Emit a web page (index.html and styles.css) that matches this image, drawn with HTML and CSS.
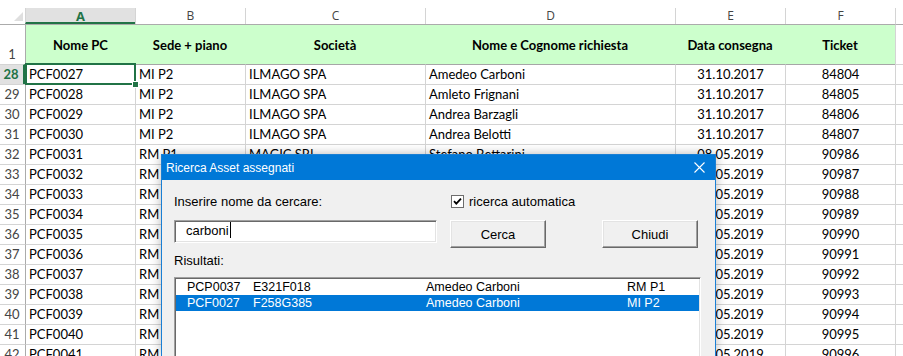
FILE: index.html
```html
<!DOCTYPE html>
<html lang="it">
<head>
    <meta charset="UTF-8">
    <title>Ricerca Asset assegnati</title>
    <link rel="stylesheet" href="styles.css">
</head>
<body>

    <div class="sheet">
        <div class="topbar"></div>

        <div class="row colhead">
            <div class="corner"><span class="tri"></span></div>
            <div class="ch active">A</div>
            <div class="ch">B</div>
            <div class="ch">C</div>
            <div class="ch">D</div>
            <div class="ch">E</div>
            <div class="ch">F</div>
            <div class="ch"></div>
        </div>

        <div class="row head">
            <div class="rh">1</div>
            <div class="c">Nome PC</div>
            <div class="c">Sede + piano</div>
            <div class="c">Società</div>
            <div class="c">Nome e Cognome richiesta</div>
            <div class="c">Data consegna</div>
            <div class="c">Ticket</div>
            <div class="c blank"></div>
        </div>

        <div class="row first">
            <div class="rh sel">28</div>
            <div class="c cur">PCF0027</div>
            <div class="c">MI P2</div>
            <div class="c">ILMAGO SPA</div>
            <div class="c">Amedeo Carboni</div>
            <div class="c mid">31.10.2017</div>
            <div class="c mid">84804</div>
            <div class="c"></div>
        </div>
        <div class="row">
            <div class="rh">29</div>
            <div class="c">PCF0028</div>
            <div class="c">MI P2</div>
            <div class="c">ILMAGO SPA</div>
            <div class="c">Amleto Frignani</div>
            <div class="c mid">31.10.2017</div>
            <div class="c mid">84805</div>
            <div class="c"></div>
        </div>
        <div class="row">
            <div class="rh">30</div>
            <div class="c">PCF0029</div>
            <div class="c">MI P2</div>
            <div class="c">ILMAGO SPA</div>
            <div class="c">Andrea Barzagli</div>
            <div class="c mid">31.10.2017</div>
            <div class="c mid">84806</div>
            <div class="c"></div>
        </div>
        <div class="row">
            <div class="rh">31</div>
            <div class="c">PCF0030</div>
            <div class="c">MI P2</div>
            <div class="c">ILMAGO SPA</div>
            <div class="c">Andrea Belotti</div>
            <div class="c mid">31.10.2017</div>
            <div class="c mid">84807</div>
            <div class="c"></div>
        </div>
        <div class="row">
            <div class="rh">32</div>
            <div class="c">PCF0031</div>
            <div class="c">RM P1</div>
            <div class="c">MAGIC SRL</div>
            <div class="c">Stefano Bettarini</div>
            <div class="c mid">08.05.2019</div>
            <div class="c mid">90986</div>
            <div class="c"></div>
        </div>
        <div class="row">
            <div class="rh">33</div>
            <div class="c">PCF0032</div>
            <div class="c">RM P1</div>
            <div class="c"></div>
            <div class="c"></div>
            <div class="c mid">08.05.2019</div>
            <div class="c mid">90987</div>
            <div class="c"></div>
        </div>
        <div class="row">
            <div class="rh">34</div>
            <div class="c">PCF0033</div>
            <div class="c">RM P1</div>
            <div class="c"></div>
            <div class="c"></div>
            <div class="c mid">08.05.2019</div>
            <div class="c mid">90988</div>
            <div class="c"></div>
        </div>
        <div class="row">
            <div class="rh">35</div>
            <div class="c">PCF0034</div>
            <div class="c">RM P1</div>
            <div class="c"></div>
            <div class="c"></div>
            <div class="c mid">08.05.2019</div>
            <div class="c mid">90989</div>
            <div class="c"></div>
        </div>
        <div class="row">
            <div class="rh">36</div>
            <div class="c">PCF0035</div>
            <div class="c">RM P1</div>
            <div class="c"></div>
            <div class="c"></div>
            <div class="c mid">08.05.2019</div>
            <div class="c mid">90990</div>
            <div class="c"></div>
        </div>
        <div class="row">
            <div class="rh">37</div>
            <div class="c">PCF0036</div>
            <div class="c">RM P1</div>
            <div class="c"></div>
            <div class="c"></div>
            <div class="c mid">08.05.2019</div>
            <div class="c mid">90991</div>
            <div class="c"></div>
        </div>
        <div class="row">
            <div class="rh">38</div>
            <div class="c">PCF0037</div>
            <div class="c">RM P1</div>
            <div class="c"></div>
            <div class="c"></div>
            <div class="c mid">08.05.2019</div>
            <div class="c mid">90992</div>
            <div class="c"></div>
        </div>
        <div class="row">
            <div class="rh">39</div>
            <div class="c">PCF0038</div>
            <div class="c">RM P1</div>
            <div class="c"></div>
            <div class="c"></div>
            <div class="c mid">08.05.2019</div>
            <div class="c mid">90993</div>
            <div class="c"></div>
        </div>
        <div class="row">
            <div class="rh">40</div>
            <div class="c">PCF0039</div>
            <div class="c">RM P1</div>
            <div class="c"></div>
            <div class="c"></div>
            <div class="c mid">08.05.2019</div>
            <div class="c mid">90994</div>
            <div class="c"></div>
        </div>
        <div class="row">
            <div class="rh">41</div>
            <div class="c">PCF0040</div>
            <div class="c">RM P1</div>
            <div class="c"></div>
            <div class="c"></div>
            <div class="c mid">08.05.2019</div>
            <div class="c mid">90995</div>
            <div class="c"></div>
        </div>
        <div class="row">
            <div class="rh">42</div>
            <div class="c">PCF0041</div>
            <div class="c">RM P1</div>
            <div class="c"></div>
            <div class="c"></div>
            <div class="c mid">08.05.2019</div>
            <div class="c mid">90996</div>
            <div class="c"></div>
        </div>
    </div>

    <div class="dialog">
        <div class="titlebar">
            <span>Ricerca Asset assegnati</span>
            <svg class="close" width="11" height="11" viewBox="0 0 11 11">
                <path d="M0.5 0.5 L10.5 10.5 M10.5 0.5 L0.5 10.5" stroke="#fff" stroke-width="1.1" fill="none"/>
            </svg>
        </div>
        <div class="dlg-body">
            <div class="line1">
                <span class="lbl">Inserire nome da cercare:</span>
                <label class="chk">
                    <svg width="13" height="13" viewBox="0 0 13 13">
                        <rect x="0.5" y="0.5" width="12" height="12" fill="#fff" stroke="#6d6d6d"/>
                        <path d="M3 6.2 L5.3 8.6 L10 3.6" stroke="#000" stroke-width="1.8" fill="none"/>
                    </svg>
                    <span>ricerca automatica</span>
                </label>
            </div>
            <div class="line2">
                <div class="textbox">carboni<span class="caret"></span></div>
                <button class="btn cerca">Cerca</button>
                <button class="btn chiudi">Chiudi</button>
            </div>
            <div class="lbl risultati">Risultati:</div>
            <div class="listbox">
                <div class="item">
                    <span>PCP0037</span><span>E321F018</span><span>Amedeo Carboni</span><span>RM P1</span>
                </div>
                <div class="item sel">
                    <span>PCF0027</span><span>F258G385</span><span>Amedeo Carboni</span><span>MI P2</span>
                </div>
            </div>
        </div>
    </div>

</body>
</html>
```

FILE: styles.css
```css
body {
    margin: 0;
    width: 903px;
    height: 356px;
    overflow: hidden;
    position: relative;
    background: #fff;
    font-family: Lato, "Liberation Sans", sans-serif;
    font-size: 13px;
    color: #000;
}
.sheet {
    height: 356px;
    overflow: hidden;
}
.topbar {
    height: 8px;
}
.row {
    display: grid;
    grid-template-columns: 25px 110px 110px 180px 250px 110px 110px 8px;
    height: 20px;
}
.row > div {
    box-sizing: border-box;
    border-left: 1px solid #d4d4d4;
    border-top: 1px solid #d4d4d4;
    white-space: nowrap;
    overflow: hidden;
    line-height: 19px;
}
.c {
    padding-left: 3px;
}
.mid {
    text-align: center;
    padding-left: 0;
}

/* column letters */
.colhead {
    height: 16px;
}
.colhead > div {
    border-top: none;
    line-height: 16px;
}
.corner {
    position: relative;
    border-left: none !important;
}
.tri {
    position: absolute;
    right: 2px;
    bottom: 3px;
    width: 0;
    height: 0;
    border-left: 9px solid transparent;
    border-bottom: 9px solid #dfdfdf;
}
.ch {
    text-align: center;
    font-family: "Open Sans", sans-serif;
    font-size: 12px;
    color: #444;
}
.ch.active {
    background: #e1e1e1;
    color: #217346;
    font-weight: bold;
    font-size: 13px;
    border-bottom: 2px solid #217346;
}

/* row numbers */
.rh {
    border-left: none !important;
    text-align: center;
    color: #444;
    padding-right: 1px;
}
.row > .c:nth-child(2) {
    border-left-color: #ababab;
}
.rh.sel {
    background: #e1e1e1;
    color: #217346;
    font-weight: bold;
    border-right: 2px solid #217346;
}

/* table heading row */
.head {
    height: 40px;
}
.head > div {
    border-top-color: #ababab;
    line-height: 40px;
}
.head .rh {
    line-height: 14px;
    padding-top: 22px;
}
.head .c {
    background: #ccffcc;
    font-weight: bold;
    text-align: center;
    padding-left: 0;
}
.head .c + .c {
    border-left: none;
}
.head .c.blank {
    background: #fff;
    border-left: 1px solid #d4d4d4;
}
.first > .c {
    border-top-color: #a6a6a6;
}
.first > .c:last-child {
    border-top-color: #d4d4d4;
}
.cur {
    position: relative;
    overflow: visible !important;
}
.cur::after {
    content: "";
    position: absolute;
    left: -1px;
    top: -2px;
    right: -1px;
    bottom: -1px;
    border: 2px solid #217346;
}
.cur::before {
    content: "";
    position: absolute;
    right: -4px;
    bottom: -4px;
    width: 5px;
    height: 5px;
    background: #217346;
    border: 1px solid #fff;
    z-index: 2;
}

/* dialog */
.dialog {
    position: absolute;
    left: 161px;
    top: 154px;
    width: 553px;
    height: 201px;
    overflow: hidden;
    background: #f0f0f0;
    border: 1px solid #1a7fd4;
    border-bottom: none;
    box-shadow: 0 0 10px rgba(0, 0, 0, 0.28);
    font-family: "Liberation Sans", Arial, sans-serif;
    font-size: 13px;
}
.titlebar {
    height: 25px;
    background: #0078d7;
    color: #fff;
    font-size: 12px;
    display: flex;
    align-items: center;
    padding-left: 4px;
}
.close {
    margin-left: auto;
    margin-right: 10px;
}
.dlg-body {
    padding-left: 12px;
}
.line1 {
    display: flex;
    align-items: center;
    height: 16px;
    margin-top: 13px;
}
.line1 .lbl {
    width: 277px;
}
.chk {
    display: flex;
    align-items: center;
    gap: 5px;
}
.chk svg {
    display: block;
}
.line2 {
    display: flex;
    align-items: flex-start;
    margin-top: 11px;
    height: 28px;
}
.textbox {
    box-sizing: border-box;
    width: 263px;
    height: 23px;
    background: #fff;
    border-top: 1px solid #a0a0a0;
    border-left: 1px solid #a0a0a0;
    border-right: 1px solid #fff;
    border-bottom: 1px solid #fff;
    box-shadow: inset 1px 1px 0 #696969, inset -1px -1px 0 #e3e3e3;
    padding-left: 11px;
    line-height: 20px;
}
.caret {
    display: inline-block;
    width: 1px;
    height: 16px;
    background: #000;
    vertical-align: -3px;
    margin-left: 1px;
}
.btn {
    box-sizing: border-box;
    width: 96px;
    height: 28px;
    padding: 0;
    background: #f0f0f0;
    font-family: "Liberation Sans", Arial, sans-serif;
    font-size: 13px;
    color: #000;
    border-top: 1px solid #fff;
    border-left: 1px solid #fff;
    border-right: 1px solid #696969;
    border-bottom: 1px solid #696969;
    box-shadow: inset -1px -1px 0 #a0a0a0, inset 1px 1px 0 #e3e3e3;
}
.cerca {
    margin-left: 13px;
}
.chiudi {
    margin-left: 56px;
}
.risultati {
    margin-top: 5px;
    height: 16px;
    line-height: 16px;
}
.listbox {
    box-sizing: border-box;
    margin-top: 8px;
    width: 527px;
    height: 90px;
    background: #fff;
    border-top: 1px solid #a0a0a0;
    border-left: 1px solid #a0a0a0;
    border-right: 1px solid #fff;
    box-shadow: inset 1px 1px 0 #696969, inset -1px 0 0 #e3e3e3;
    padding: 1px 1px 0 1px;
}
.item {
    display: grid;
    grid-template-columns: 66px 173px 201px 1fr;
    height: 16px;
    line-height: 16px;
    padding-left: 11px;
    font-size: 12.5px;
    white-space: nowrap;
}
.item.sel {
    background: #0078d7;
    color: #fff;
}
```
